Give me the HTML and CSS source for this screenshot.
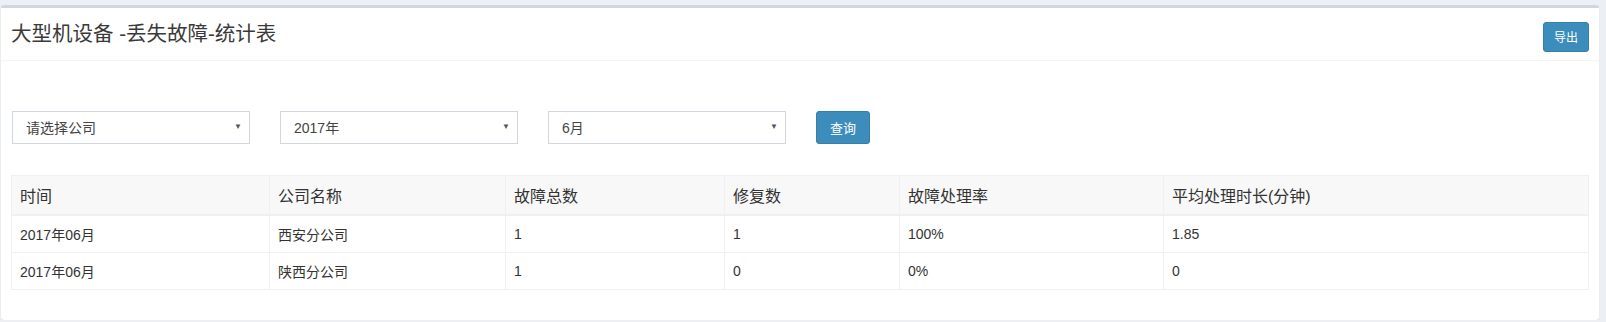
FILE: index.html
```
<!DOCTYPE html>
<html lang="zh-CN">
<head>
    <meta charset="UTF-8">
    <title>大型机设备 -丢失故障-统计表</title>
    <link rel="stylesheet" href="styles.css">
</head>
<body>
    <div class="content">
        <div class="box">
            <div class="box-header">
                <h3 class="box-title">大型机设备 -丢失故障-统计表</h3>
                <button class="btn btn-export">导出</button>
            </div>
            <div class="box-body">
                <form class="filters">
                    <div class="select-wrap">
                        <select class="form-select">
                            <option>请选择公司</option>
                        </select>
                    </div>
                    <div class="select-wrap">
                        <select class="form-select">
                            <option>2017年</option>
                        </select>
                    </div>
                    <div class="select-wrap">
                        <select class="form-select">
                            <option>6月</option>
                        </select>
                    </div>
                    <button type="button" class="btn btn-query">查询</button>
                </form>
                <table class="stats">
                    <colgroup>
                        <col class="c-time">
                        <col class="c-company">
                        <col class="c-total">
                        <col class="c-fixed">
                        <col class="c-rate">
                        <col class="c-avg">
                    </colgroup>
                    <thead>
                        <tr>
                            <th>时间</th>
                            <th>公司名称</th>
                            <th>故障总数</th>
                            <th>修复数</th>
                            <th>故障处理率</th>
                            <th>平均处理时长(分钟)</th>
                        </tr>
                    </thead>
                    <tbody>
                        <tr>
                            <td>2017年06月</td>
                            <td>西安分公司</td>
                            <td>1</td>
                            <td>1</td>
                            <td>100%</td>
                            <td>1.85</td>
                        </tr>
                        <tr>
                            <td>2017年06月</td>
                            <td>陕西分公司</td>
                            <td>1</td>
                            <td>0</td>
                            <td>0%</td>
                            <td>0</td>
                        </tr>
                    </tbody>
                </table>
            </div>
        </div>
    </div>
</body>
</html>
```

FILE: styles.css
```
/* Thème */
:root {
  --page-bg: #ecf0f5;
  --border: #d2d6de;
  --line: #f0f0f0;
  --text: #333;
  --primary: #3c8dbc;
  --primary-border: #367fa9;
}
body {
  margin: 0;
  background: var(--page-bg);
  color: var(--text);
  font-family: "Liberation Sans", "Noto Sans CJK SC", sans-serif;
}
.content {
  padding: 5px 7px 0 1px;
}
.box {
  background: #fff;
  border-top: 3px solid var(--border);
  border-radius: 3px;
  box-shadow: 0 1px 1px rgba(0,0,0,0.1);
}
.box-header {
  display: flex;
  justify-content: space-between;
  align-items: center;
  height: 52px;
  padding: 0 10px;
  border-bottom: 1px solid #f4f4f4;
}
.box-title {
  margin: 0;
  font-size: 20.5px;
  font-weight: normal;
  line-height: 1.1;
  color: #3a3a3a;
}
.btn {
  height: 33px;
  padding: 0 12px;
  font-family: inherit;
  font-size: 13px;
  color: #fff;
  background: var(--primary);
  border: 1px solid var(--primary-border);
  border-radius: 3px;
  cursor: pointer;
}
.btn-export {
  width: 46px;
  height: 30px;
  padding: 0;
  margin-top: 5px;
  font-size: 12px;
}
.box-body {
  padding: 10px 10px 30px;
}
.filters {
  display: flex;
  align-items: center;
  gap: 30px;
  margin: 40px 0 31px 1px;
}
.select-wrap {
  position: relative;
  width: 238px;
}
.select-wrap::after {
  content: "▼";
  position: absolute;
  right: 8px;
  top: 11px;
  font-size: 8px;
  color: #555;
  pointer-events: none;
}
.form-select {
  appearance: none;
  width: 100%;
  height: 33px;
  padding: 0 13px;
  font-family: inherit;
  font-size: 14px;
  color: #444;
  background: #fff;
  border: 1px solid var(--border);
  border-radius: 0;
}
.btn-query {
  width: 54px;
  padding: 0;
}
.stats {
  width: 100%;
  border-collapse: collapse;
  table-layout: fixed;
}
.c-time { width: 258px; }
.c-company { width: 236px; }
.c-total { width: 219px; }
.c-fixed { width: 175px; }
.c-rate { width: 264px; }
.stats th,
.stats td {
  border: 1px solid var(--line);
  padding: 0 8px;
  text-align: left;
  font-weight: normal;
}
.stats th {
  height: 38px;
  font-size: 16px;
  background: #f8f8f8;
  border-bottom-width: 2px;
}
.stats td {
  height: 36px;
  font-size: 14px;
}
```
